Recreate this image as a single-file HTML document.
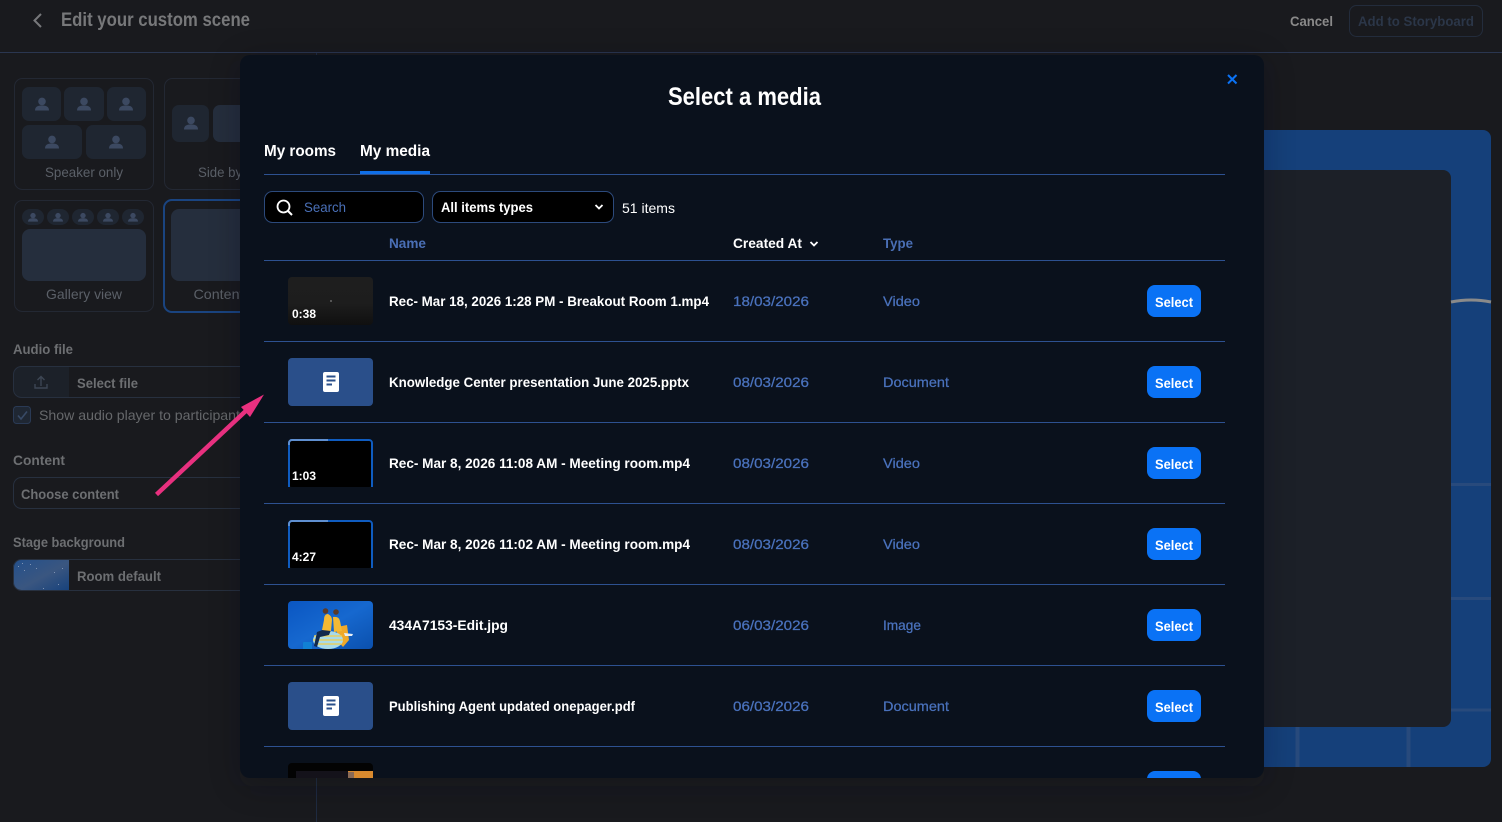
<!DOCTYPE html>
<html lang="en"><head><meta charset="utf-8"><title>Select a media</title>
<style>
html,body{margin:0;padding:0;background:#191a1e;width:1502px;height:822px;overflow:hidden}
svg{display:block}
text{font-family:"Liberation Sans",sans-serif;font-weight:700;white-space:pre}
.n{font-weight:400}
.lbl{font-size:14px;fill:#6d6f72}
.card{font-size:14px;fill:#5b6068;font-weight:400}
.row{font-size:14px;fill:#fff}
.date{font-size:14px;fill:#4a72bd;font-weight:400;stroke:#4a72bd;stroke-width:.25}
.time{font-size:11.5px;fill:#fff}
.btn{font-size:13.5px;fill:#fff}
.hd{font-size:14px;fill:#4a6fb5}
.tile{fill:#1f2631}
.big{fill:#252e3d}
.pers{fill:#3c4961}
.dv{stroke:#2d5190;stroke-width:1}
</style></head><body>
<svg width="1502" height="822" viewBox="0 0 1502 822" xmlns="http://www.w3.org/2000/svg">
<defs>
<g id="p"><circle cx="0" cy="-3.6" r="3.8"/><path d="M-7 5.5C-7 1.5-4 0.5 0 0.5S7 1.5 7 5.5Z"/></g>
<g id="ps"><circle cx="0" cy="-2.4" r="2.7"/><path d="M-5 3.6C-5 0.8-3 .2 0 .2S5 .8 5 3.6Z"/></g>
<g id="doc"><rect x="-8" y="-10" width="16" height="20" rx="2" fill="#fff"/><path d="M-4.5-5.5H4.5M-4.5-1.5H4.5M-4.5 2.5H1" stroke="#2a4f8a" stroke-width="2" fill="none"/></g>
<linearGradient id="d1" x1="0" y1="0" x2="0" y2="1"><stop offset="0" stop-color="#1e1e1e"/><stop offset=".55" stop-color="#1d1d1d"/><stop offset="1" stop-color="#101010"/></linearGradient>
<linearGradient id="blue" x1="0" y1="0" x2="1" y2="1"><stop offset="0" stop-color="#0a56c2"/><stop offset=".5" stop-color="#1668cf"/><stop offset="1" stop-color="#0b50ad"/></linearGradient>
<linearGradient id="room" x1="0" y1="0" x2="1" y2="1"><stop offset="0" stop-color="#23508c"/><stop offset=".55" stop-color="#3a5680"/><stop offset="1" stop-color="#17427c"/></linearGradient>
<clipPath id="mc"><rect x="240" y="55" width="1024" height="723" rx="10"/></clipPath>
<clipPath id="t1"><rect x="288" y="601" width="85" height="48" rx="4"/></clipPath>
<filter id="sh" x="-10%" y="-10%" width="120%" height="120%"><feGaussianBlur stdDeviation="16"/></filter>
</defs>

<rect width="1502" height="822" fill="#191a1e"/>
<!-- top bar -->
<path d="M41 14L34.500 20.500L41 27" fill="none" stroke="#77787b" stroke-width="2"/>
<text x="61" y="26" font-size="19" fill="#77787a" textLength="189" lengthAdjust="spacingAndGlyphs">Edit your custom scene</text>
<text x="1290" y="26" font-size="14" fill="#8a8a8a" textLength="43" lengthAdjust="spacingAndGlyphs">Cancel</text>
<rect x="1349.500" y="5.500" width="133" height="31" rx="7" fill="none" stroke="#232c3c"/>
<text x="1358" y="26" font-size="14" fill="#2b3648" textLength="116" lengthAdjust="spacingAndGlyphs">Add to Storyboard</text>
<path d="M0 52.500H1502" stroke="#2a3650"/>
<path d="M316.500 53V822" stroke="#1f2b41"/>

<!-- stage -->
<rect x="1100" y="130" width="391" height="637" rx="8" fill="#15407a"/>
<path d="M1297.500 727V767M1408.500 727V767" stroke="#284a7c" stroke-width="4"/>
<path d="M1451 484.500H1491M1451 598.500H1491M1451 710H1491" stroke="#284a7c" stroke-width="3"/>
<rect x="1100" y="170" width="351" height="557" rx="8" fill="#1c2028"/>
<path d="M1451 302Q1471 298 1491 302" fill="none" stroke="#8a8a8a" stroke-width="3"/>

<!-- scene cards -->
<rect x="14.500" y="78.500" width="139" height="111" rx="8" fill="none" stroke="#232833"/>
<g class="tile"><rect x="22" y="87" width="39" height="34" rx="7"/><rect x="64" y="87" width="40" height="34" rx="7"/><rect x="107" y="87" width="39" height="34" rx="7"/><rect x="22" y="125" width="60" height="34" rx="7"/><rect x="86" y="125" width="60" height="34" rx="7"/></g>
<g class="pers"><use href="#p" x="42" y="105"/><use href="#p" x="84" y="105"/><use href="#p" x="126" y="105"/><use href="#p" x="52" y="143"/><use href="#p" x="116" y="143"/></g>
<text x="45" y="177" class="card" textLength="78" lengthAdjust="spacingAndGlyphs">Speaker only</text>

<rect x="164.500" y="78.500" width="120" height="111" rx="8" fill="none" stroke="#232833"/>
<rect x="172" y="105" width="37" height="37" rx="7" class="tile"/>
<rect x="213" y="105" width="60" height="37" rx="7" fill="#252e3d"/>
<use href="#p" x="191" y="124" class="pers"/>
<text x="198" y="177" class="card" textLength="72" lengthAdjust="spacingAndGlyphs">Side by side</text>

<rect x="14.500" y="200.500" width="139" height="111" rx="8" fill="none" stroke="#232833"/>
<g class="tile"><rect x="22" y="209" width="22" height="16" rx="8"/><rect x="47" y="209" width="22" height="16" rx="8"/><rect x="72" y="209" width="22" height="16" rx="8"/><rect x="97" y="209" width="22" height="16" rx="8"/><rect x="122" y="209" width="22" height="16" rx="8"/></g>
<g class="pers"><use href="#ps" x="33" y="218"/><use href="#ps" x="58" y="218"/><use href="#ps" x="83" y="218"/><use href="#ps" x="108" y="218"/><use href="#ps" x="133" y="218"/></g>
<rect x="22" y="229" width="124" height="52" rx="8" class="big"/>
<text x="46" y="299" class="card" textLength="76" lengthAdjust="spacingAndGlyphs">Gallery view</text>

<rect x="164" y="200" width="120" height="112" rx="8" fill="none" stroke="#1a4480" stroke-width="2"/>
<rect x="171" y="209" width="100" height="72" rx="8" class="big"/>
<text x="193.500" y="299" class="card" textLength="50" lengthAdjust="spacingAndGlyphs">Content</text>

<!-- form -->
<text x="13" y="354" class="lbl" textLength="60" lengthAdjust="spacingAndGlyphs">Audio file</text>
<path d="M69 366.500H21a8 8 0 0 0-8 8V389a8 8 0 0 0 8 8H69Z" fill="#1c2129"/>
<rect x="13.500" y="366.500" width="300" height="31" rx="8" fill="none" stroke="#27303f"/>
<path d="M41 386V377M37.500 380L41 376.500L44.500 380M35 384V388H47V384" fill="none" stroke="#3d4654" stroke-width="1.400"/>
<text x="77" y="388" class="lbl" textLength="61" lengthAdjust="spacingAndGlyphs">Select file</text>
<rect x="13.500" y="406.500" width="17" height="17" rx="3" fill="#1f2733" stroke="#2a3a55"/>
<path d="M18 415.500L21 419L27 411.500" fill="none" stroke="#384a66" stroke-width="1.600"/>
<text x="39" y="420" class="card" style="fill:#66686b" textLength="208" lengthAdjust="spacingAndGlyphs">Show audio player to participants</text>
<text x="13" y="465" class="lbl" textLength="52" lengthAdjust="spacingAndGlyphs">Content</text>
<rect x="13.500" y="477.500" width="300" height="31" rx="8" fill="none" stroke="#27303f"/>
<text x="21" y="499" class="lbl" textLength="98" lengthAdjust="spacingAndGlyphs">Choose content</text>
<text x="13" y="547" class="lbl" textLength="112" lengthAdjust="spacingAndGlyphs">Stage background</text>
<path d="M69 559.500H21a8 8 0 0 0-8 8V582a8 8 0 0 0 8 8H69Z" fill="url(#room)"/>
<g fill="#7f93b3"><rect x="18" y="566" width="1" height="1"/><rect x="24" y="570" width="1" height="1"/><rect x="30" y="564" width="1" height="1"/><rect x="22" y="563" width="1" height="1"/><rect x="36" y="568" width="1" height="1"/><rect x="43" y="588" width="1" height="1"/><rect x="54" y="572" width="1" height="1"/><rect x="58" y="584" width="1" height="1"/><rect x="62" y="568" width="1" height="1"/></g>
<rect x="13.500" y="559.500" width="300" height="31" rx="8" fill="none" stroke="#27303f"/>
<text x="77" y="581" class="lbl" textLength="84" lengthAdjust="spacingAndGlyphs">Room default</text>

<!-- modal -->
<rect x="240" y="60" width="1024" height="726" rx="12" fill="#0c0e12" opacity=".28" filter="url(#sh)"/>
<rect x="240" y="55" width="1024" height="723" rx="10" fill="#0a111c"/>
<g clip-path="url(#mc)">
<text x="668" y="105" font-size="25" fill="#fff" textLength="153" lengthAdjust="spacingAndGlyphs">Select a media</text>
<path d="M1228 75L1236.500 83.500M1236.500 75L1228 83.500" stroke="#0a72f5" stroke-width="2" fill="none"/>
<text x="264" y="156" font-size="15.500" fill="#fff" textLength="72" lengthAdjust="spacingAndGlyphs">My rooms</text>
<text x="360" y="156" font-size="15.500" fill="#fff" textLength="70" lengthAdjust="spacingAndGlyphs">My media</text>
<path d="M264 174.500H1225" class="dv"/>
<rect x="360" y="171" width="70" height="3" fill="#0f6fe8"/>

<rect x="264.500" y="191.500" width="159" height="31" rx="8" fill="#000" stroke="#2c4a7c"/>
<circle cx="283.500" cy="206.500" r="6" fill="none" stroke="#fff" stroke-width="1.800"/>
<path d="M288 211L292 215" stroke="#fff" stroke-width="2"/>
<text x="304" y="212" class="n" font-size="14" fill="#4a70b8" textLength="42" lengthAdjust="spacingAndGlyphs">Search</text>
<rect x="432.500" y="191.500" width="181" height="31" rx="8" fill="#000" stroke="#2c4a7c"/>
<text x="441" y="212" font-size="14" fill="#fff" textLength="92" lengthAdjust="spacingAndGlyphs">All items types</text>
<path d="M595.500 205L599 208.500L602.500 205" fill="none" stroke="#fff" stroke-width="1.800"/>
<text x="622" y="213" class="n" font-size="14" fill="#fff" textLength="53" lengthAdjust="spacingAndGlyphs">51 items</text>

<text x="389" y="248" class="hd" textLength="37" lengthAdjust="spacingAndGlyphs">Name</text>
<text x="733" y="248" font-size="14" fill="#fff" textLength="69" lengthAdjust="spacingAndGlyphs">Created At</text>
<path d="M810.500 242L814 245.500L817.500 242" fill="none" stroke="#fff" stroke-width="1.800"/>
<text x="883" y="248" class="hd" textLength="30" lengthAdjust="spacingAndGlyphs">Type</text>
<path d="M264 260.500H1225M264 341.500H1225M264 422.500H1225M264 503.500H1225M264 584.500H1225M264 665.500H1225M264 746.500H1225" class="dv"/>

<!-- row 1 -->
<rect x="288" y="277" width="85" height="48" rx="4" fill="url(#d1)"/>
<rect x="330" y="300" width="2" height="2" fill="#555"/>
<text x="292" y="318" class="time" textLength="24" lengthAdjust="spacingAndGlyphs">0:38</text>
<text x="389" y="306" class="row" textLength="320" lengthAdjust="spacingAndGlyphs">Rec- Mar 18, 2026 1:28 PM - Breakout Room 1.mp4</text>
<text x="733" y="306" class="date" textLength="76" lengthAdjust="spacingAndGlyphs">18/03/2026</text>
<text x="883" y="306" class="date" textLength="37" lengthAdjust="spacingAndGlyphs">Video</text>
<rect x="1147" y="285" width="54" height="32" rx="8" fill="#0a72f5"/>
<text x="1155" y="307" class="btn" textLength="38" lengthAdjust="spacingAndGlyphs">Select</text>

<!-- row 2 -->
<rect x="288" y="358" width="85" height="48" rx="4" fill="#2a4f8a"/>
<use href="#doc" x="331" y="382"/>
<text x="389" y="387" class="row" textLength="300" lengthAdjust="spacingAndGlyphs">Knowledge Center presentation June 2025.pptx</text>
<text x="733" y="387" class="date" textLength="76" lengthAdjust="spacingAndGlyphs">08/03/2026</text>
<text x="883" y="387" class="date" textLength="66" lengthAdjust="spacingAndGlyphs">Document</text>
<rect x="1147" y="366" width="54" height="32" rx="8" fill="#0a72f5"/>
<text x="1155" y="388" class="btn" textLength="38" lengthAdjust="spacingAndGlyphs">Select</text>

<!-- row 3 -->
<rect x="288" y="439" width="85" height="48" rx="4" fill="#000"/>
<path d="M289 487V443a3 3 0 0 1 3-3H369a3 3 0 0 1 3 3V487" fill="none" stroke="#0f5cc0" stroke-width="2"/>
<path d="M289 445V443a3 3 0 0 1 3-3H328" fill="none" stroke="#5f8fd0" stroke-width="2"/>
<text x="292" y="480" class="time" textLength="24" lengthAdjust="spacingAndGlyphs">1:03</text>
<text x="389" y="468" class="row" textLength="301" lengthAdjust="spacingAndGlyphs">Rec- Mar 8, 2026 11:08 AM - Meeting room.mp4</text>
<text x="733" y="468" class="date" textLength="76" lengthAdjust="spacingAndGlyphs">08/03/2026</text>
<text x="883" y="468" class="date" textLength="37" lengthAdjust="spacingAndGlyphs">Video</text>
<rect x="1147" y="447" width="54" height="32" rx="8" fill="#0a72f5"/>
<text x="1155" y="469" class="btn" textLength="38" lengthAdjust="spacingAndGlyphs">Select</text>

<!-- row 4 -->
<rect x="288" y="520" width="85" height="48" rx="4" fill="#000"/>
<path d="M289 568V524a3 3 0 0 1 3-3H369a3 3 0 0 1 3 3V568" fill="none" stroke="#0f5cc0" stroke-width="2"/>
<path d="M289 526V524a3 3 0 0 1 3-3H328" fill="none" stroke="#5f8fd0" stroke-width="2"/>
<text x="292" y="561" class="time" textLength="24" lengthAdjust="spacingAndGlyphs">4:27</text>
<text x="389" y="549" class="row" textLength="301" lengthAdjust="spacingAndGlyphs">Rec- Mar 8, 2026 11:02 AM - Meeting room.mp4</text>
<text x="733" y="549" class="date" textLength="76" lengthAdjust="spacingAndGlyphs">08/03/2026</text>
<text x="883" y="549" class="date" textLength="37" lengthAdjust="spacingAndGlyphs">Video</text>
<rect x="1147" y="528" width="54" height="32" rx="8" fill="#0a72f5"/>
<text x="1155" y="550" class="btn" textLength="38" lengthAdjust="spacingAndGlyphs">Select</text>

<!-- row 5 -->
<rect x="288" y="601" width="85" height="48" rx="4" fill="url(#blue)"/>
<g clip-path="url(#t1)">
<path d="M337 627L347 625L349 640L343 647L337 640Z" fill="#f0a92a"/>
<ellipse cx="328" cy="640" rx="15" ry="9" fill="#a9dbe8"/>
<path d="M314 636H342M313 640H343M315 644H341" stroke="#f2cd4a" stroke-width="1.300"/>
<path d="M325 629L317 632L314 646L317 647L320 637L329 635L331 630Z" fill="#11294d"/>
<path d="M324 620Q324 614 328 614Q332 616 332 620L331 631L322 630Z" fill="#f4b934"/>
<path d="M333 617Q339 616 340 621L342 631L334 632Z" fill="#f4b934"/>
<path d="M344 633L353 634L352 636L345 636Z" fill="#e8eef5"/>
<circle cx="325.500" cy="611" r="2.800" fill="#5b3a28"/>
<circle cx="336" cy="612" r="2.800" fill="#5b3a28"/>
<rect x="303" y="642" width="9" height="8" rx="1" fill="#1180d4"/>
</g>
<text x="389" y="630" class="row" textLength="119" lengthAdjust="spacingAndGlyphs">434A7153-Edit.jpg</text>
<text x="733" y="630" class="date" textLength="76" lengthAdjust="spacingAndGlyphs">06/03/2026</text>
<text x="883" y="630" class="date" textLength="38" lengthAdjust="spacingAndGlyphs">Image</text>
<rect x="1147" y="609" width="54" height="32" rx="8" fill="#0a72f5"/>
<text x="1155" y="631" class="btn" textLength="38" lengthAdjust="spacingAndGlyphs">Select</text>

<!-- row 6 -->
<rect x="288" y="682" width="85" height="48" rx="4" fill="#2a4f8a"/>
<use href="#doc" x="331" y="706"/>
<text x="389" y="711" class="row" textLength="246" lengthAdjust="spacingAndGlyphs">Publishing Agent updated onepager.pdf</text>
<text x="733" y="711" class="date" textLength="76" lengthAdjust="spacingAndGlyphs">06/03/2026</text>
<text x="883" y="711" class="date" textLength="66" lengthAdjust="spacingAndGlyphs">Document</text>
<rect x="1147" y="690" width="54" height="32" rx="8" fill="#0a72f5"/>
<text x="1155" y="712" class="btn" textLength="38" lengthAdjust="spacingAndGlyphs">Select</text>

<!-- row 7 -->
<rect x="288" y="763" width="85" height="48" rx="4" fill="#030303"/>
<rect x="296" y="771" width="52" height="8" fill="#14121a"/>
<rect x="348" y="771" width="25" height="8" fill="#d98a2e"/>
<rect x="348" y="772" width="6" height="6" fill="#8a6a55"/>
<rect x="1147" y="771" width="54" height="32" rx="8" fill="#0a72f5"/>
</g>

<!-- annotation arrow -->
<path d="M156.500 494.500L250 407" stroke="#e8307f" stroke-width="4.500" fill="none"/>
<path d="M264 394.500L241 407L250 417Z" fill="#e8307f"/>
</svg>
</body></html>
